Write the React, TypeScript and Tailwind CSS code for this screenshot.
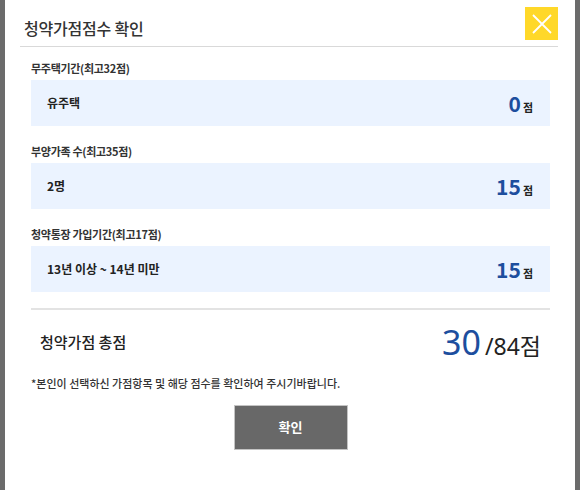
const font = { fontFamily: '"Noto Sans CJK KR", "Noto Sans", sans-serif' };

type Item = { label: string; value: string; score: number };

const items: Item[] = [
  { label: '무주택기간(최고32점)', value: '유주택', score: 0 },
  { label: '부양가족 수(최고35점)', value: '2명', score: 15 },
  { label: '청약통장 가입기간(최고17점)', value: '13년 이상 ~ 14년 미만', score: 15 },
];

function ScoreBlock({ item, first }: { item: Item; first?: boolean }) {
  return (
    <div className={first ? 'mt-[13px]' : 'mt-[17px]'}>
      <div className="h-[16px] text-[11px] font-bold leading-[16px] tracking-[-0.3px] text-[#333]">
        {item.label}
      </div>
      <div className="mt-[4px] flex h-[46px] items-center justify-between bg-[#ebf3ff] pl-[16px] pr-[17px]">
        <span className="text-[12px] font-bold text-[#222]">{item.value}</span>
        <span className="flex items-baseline">
          <span className="text-[21px] font-bold leading-none text-[#1d4e9e]">{item.score}</span>
          <span className="ml-[2px] text-[11px] font-bold leading-none text-[#222]">점</span>
        </span>
      </div>
    </div>
  );
}

export default function App() {
  return (
    <div className="flex h-[490px] w-[580px] overflow-hidden bg-white" style={font}>
      <div className="w-[5px] shrink-0 bg-[#6b6b6b]" />
      <div className="flex flex-1 flex-col bg-white">
        <div className="ml-[15px] mr-[17px] flex h-[47px] justify-between border-b border-[#d9d9d9] pt-[7px]">
          <h1 className="self-end pb-[6px] pl-[4px] text-[16px] font-medium tracking-[-0.2px] text-[#333]">
            청약가점점수 확인
          </h1>
          <button className="flex h-[33px] w-[33px] items-center justify-center bg-[#ffd829]">
            <svg width="22" height="22" viewBox="0 0 22 22" fill="none" stroke="white" strokeWidth="1.8">
              <path d="M2 2L20 20M20 2L2 20" />
            </svg>
          </button>
        </div>

        <div className="ml-[26px] mr-[25px] flex flex-col">
          {items.map((it, i) => (
            <ScoreBlock key={it.label} item={it} first={i === 0} />
          ))}
          <div className="mt-[16px] border-t-2 border-[#e3e3e3]" />
          <div className="flex h-[64px] items-center justify-between pl-[9px] pr-[9px]">
            <span className="text-[15px] font-medium text-[#222]">청약가점 총점</span>
            <span className="flex items-baseline" style={{ fontFamily: '"Noto Sans", "Noto Sans CJK KR", sans-serif' }}>
              <span className="text-[34px] leading-none text-[#1d4e9e]">30</span>
              <span className="ml-[4px] text-[23px] leading-none text-[#222]">/84점</span>
            </span>
          </div>
          <p className="mt-[1px] text-[11px] font-medium text-[#333]">
            *본인이 선택하신 가점항목 및 해당 점수를 확인하여 주시기바랍니다.
          </p>
          <div className="mt-[13px] flex justify-center">
            <button className="h-[45px] w-[114px] border border-[#c4c4c4] bg-[#686868] text-[13px] font-bold text-white">
              확인
            </button>
          </div>
        </div>
      </div>
      <div className="w-[5px] shrink-0 bg-[#6b6b6b]" />
    </div>
  );
}
